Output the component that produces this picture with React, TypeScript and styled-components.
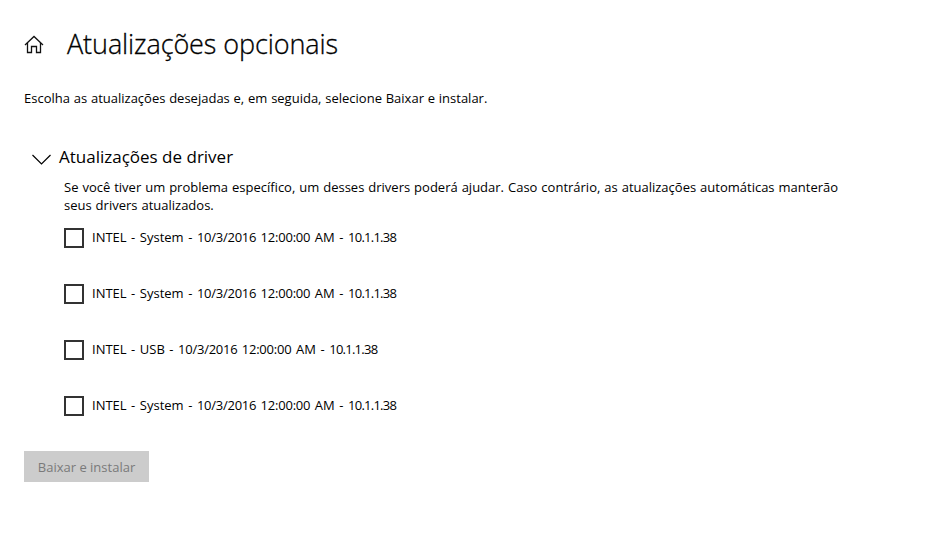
import React from "react";
import styled, { createGlobalStyle } from "styled-components";

const Global = createGlobalStyle`
  * { box-sizing: border-box; }
  body { margin: 0; background: #fff; color: #000; font-family: "Open Sans", "Noto Sans", sans-serif; }
`;

const Page = styled.main`
  display: flex;
  flex-direction: column;
  align-items: flex-start;
  height: 553px;
  padding: 24px 24px 0;
`;

const Header = styled.header`
  display: flex;
  align-items: center;
  gap: 23px;
  height: 40px;
`;

const Title = styled.h1`
  margin: 0;
  font-size: 27px;
  font-weight: 300;
  letter-spacing: -0.1px;
  line-height: 40px;
  white-space: nowrap;
  -webkit-text-stroke: 0.3px #000;
`;

const Intro = styled.p`
  margin: 25px 0 0;
  font-size: 13px;
  line-height: 18px;
  word-spacing: 0.4px;
  white-space: nowrap;
`;

const SectionHeader = styled.div`
  display: flex;
  align-items: center;
  gap: 8px;
  height: 24px;
  margin: 38px 0 0 8px;
`;

const SectionTitle = styled.h2`
  margin: 0;
  font-size: 17px;
  font-weight: 400;
  line-height: 24px;
`;

const Description = styled.p`
  max-width: 790px;
  margin: 9px 0 0 40px;
  font-size: 13px;
  line-height: 18px;
  word-spacing: 0.58px;
`;

const DriverList = styled.ul`
  display: flex;
  flex-direction: column;
  gap: 36px;
  margin: 14px 0 0 40px;
  padding: 0;
  list-style: none;
`;

const Driver = styled.li`
  display: flex;
  gap: 8px;
  height: 20px;
  font-size: 13px;
  line-height: 18px;
`;

const Checkbox = styled.span`
  width: 20px;
  height: 20px;
  border: 2px solid #333;
`;

const DriverName = styled.span`
  word-spacing: 1.15px;
  white-space: nowrap;
`;

const Figures = styled.span<{ $tracking: number }>`
  letter-spacing: ${(p) => p.$tracking}px;
`;

const InstallButton = styled.button`
  width: 125px;
  height: 31px;
  margin-top: 35px;
  padding: 1px 0 0;
  border: 0;
  background: #ccc;
  color: #7a7a7a;
  font: 13px/30px "Open Sans", sans-serif;
`;

const drivers = ["System", "System", "USB", "System"];

export default function App() {
  return (
    <>
      <Global />
      <Page>
        <Header>
          <svg width="20" height="20" viewBox="0 0 20 20" fill="none" stroke="#111" strokeWidth="1.3">
            <path d="M1 11 10 2.500l9 8.500M3.500 9v9.500h4v-6h5v6h4V9" />
          </svg>
          <Title>Atualizações opcionais</Title>
        </Header>
        <Intro>Escolha as atualizações desejadas e, em seguida, selecione Baixar e instalar.</Intro>
        <SectionHeader>
          <svg width="19" height="24" viewBox="0 0 19 24" fill="none" stroke="#000" strokeWidth="1.2">
            <path d="m.5 10 9 9 9-9" />
          </svg>
          <SectionTitle>Atualizações de driver</SectionTitle>
        </SectionHeader>
        <Description>
          Se você tiver um problema específico, um desses drivers poderá ajudar. Caso contrário, as atualizações automáticas manterão seus drivers atualizados.
        </Description>
        <DriverList>
          {drivers.map((device, i) => (
            <Driver key={i}>
              <Checkbox />
              <DriverName>
                INTEL - {device} - <Figures $tracking={-0.25}>10/3/2016 </Figures>
                <Figures $tracking={-0.2}>12:00:00</Figures> AM -{" "}
                <Figures $tracking={-0.75}>10.1.1.38</Figures>
              </DriverName>
            </Driver>
          ))}
        </DriverList>
        <InstallButton disabled>Baixar e instalar</InstallButton>
      </Page>
    </>
  );
}
